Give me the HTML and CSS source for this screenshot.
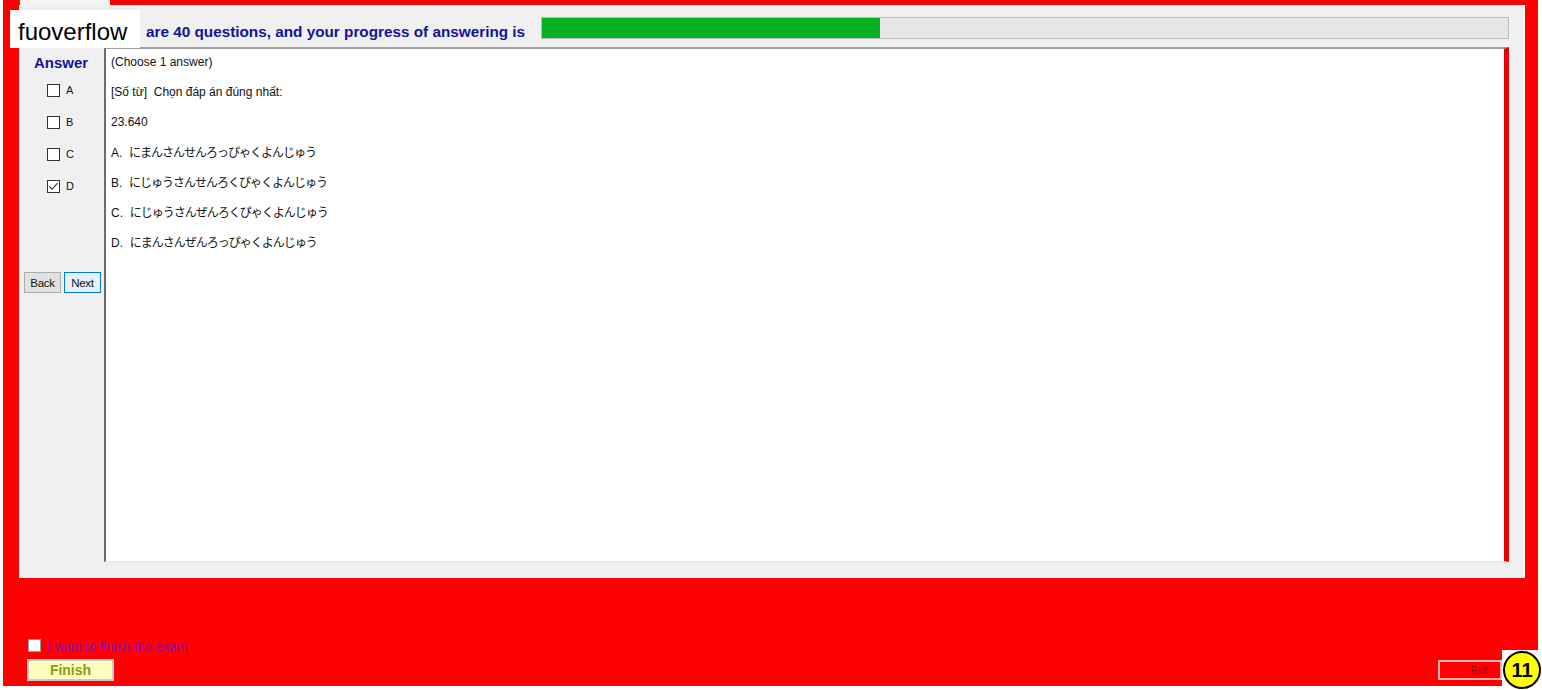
FILE: index.html
```html
<!DOCTYPE html>
<html lang="vi">
<head>
    <meta charset="UTF-8">
    <title>Exam</title>
    <link rel="stylesheet" href="styles.css">
</head>
<body>
    <div class="frame">
        <div class="top-tab"></div>
        <div class="panel">
            <div class="header">
                <div class="header-text">are 40 questions, and your progress of answering is</div>
                <div class="progress"><div class="progress-fill" style="width: 35%"></div></div>
            </div>
            <div class="main">
                <div class="answer-col">
                    <div class="answer-title">Answer</div>
                    <div class="answer-row"><span class="box"></span><span class="answer-label">A</span></div>
                    <div class="answer-row"><span class="box"></span><span class="answer-label">B</span></div>
                    <div class="answer-row"><span class="box"></span><span class="answer-label">C</span></div>
                    <div class="answer-row">
                        <span class="box">
                            <svg width="11" height="11" viewBox="0 0 11 11"><path d="M1.5 5.5 L4.2 8.3 L9.5 2.2" fill="none" stroke="#222" stroke-width="1.1"/></svg>
                        </span>
                        <span class="answer-label">D</span>
                    </div>
                    <div class="nav-buttons">
                        <button class="nav-btn">Back</button>
                        <button class="nav-btn next">Next</button>
                    </div>
                </div>
                <div class="question">
                    <div class="q-line">(Choose 1 answer)</div>
                    <div class="q-line">[Số từ]&nbsp; Chọn đáp án đúng nhất:</div>
                    <div class="q-line">23.640</div>
                    <div class="q-line">A.&nbsp; <span class="jp">にまんさんせんろっぴゃくよんじゅう</span></div>
                    <div class="q-line">B.&nbsp; <span class="jp">にじゅうさんせんろくぴゃくよんじゅう</span></div>
                    <div class="q-line">C.&nbsp; <span class="jp">にじゅうさんぜんろくぴゃくよんじゅう</span></div>
                    <div class="q-line">D.&nbsp; <span class="jp">にまんさんぜんろっぴゃくよんじゅう</span></div>
                </div>
            </div>
        </div>
        <div class="footer">
            <div class="finish-group">
                <div class="finish-check"><span class="white-box"></span><span class="finish-label">I want to finish the exam</span></div>
                <button class="finish-btn">Finish</button>
            </div>
            <button class="exit-btn">Exit</button>
        </div>
    </div>
    <div class="watermark">fuoverflow</div>
    <div class="badge"><span class="badge-circle">11</span></div>
</body>
</html>
```

FILE: styles.css
```css
body {
    margin: 0;
    background-color: #ffffff;
    font-family: "Liberation Sans", Arial, sans-serif;
    width: 1542px;
    height: 690px;
    overflow: hidden;
    position: relative;
}

.frame {
    margin-left: 3px;
    width: 1535px;
    height: 686px;
    background-color: #ff0000;
    display: flex;
    flex-direction: column;
}

.top-tab {
    margin-left: 17px;
    width: 90px;
    height: 5px;
    background-color: #f4f4f4;
}

.panel {
    margin-left: 16px;
    width: 1504px;
    height: 573px;
    background-color: #f0f0f0;
    border-right: 2px solid #fafafa;
    display: flex;
    flex-direction: column;
}

.header {
    display: flex;
    align-items: center;
    height: 42px;
    padding-top: 4px;
    box-sizing: border-box;
}

.header-text {
    width: 395px;
    margin-left: 127px;
    margin-top: 8px;
    font-size: 15.3px;
    font-weight: bold;
    color: #14149a;
    white-space: nowrap;
}

.progress {
    width: 968px;
    height: 22px;
    box-sizing: border-box;
    border: 1px solid #bcbcbc;
    background-color: #e6e6e6;
}

.progress-fill {
    height: 100%;
    background-color: #06b025;
}

.main {
    display: flex;
    height: 515px;
}

.answer-col {
    width: 85px;
    padding-top: 7px;
    box-sizing: border-box;
}

.answer-title {
    font-size: 15px;
    font-weight: bold;
    line-height: 18px;
    color: #14149a;
    margin-bottom: 2px;
    padding-left: 15px;
}

.answer-row {
    display: flex;
    align-items: center;
    height: 32px;
    padding-left: 28px;
}

.box {
    width: 13px;
    height: 13px;
    box-sizing: border-box;
    border: 1px solid #333333;
    background-color: #ffffff;
    display: flex;
    align-items: center;
    justify-content: center;
}

.answer-label {
    margin-left: 6px;
    font-size: 11px;
    color: #111111;
}

.nav-buttons {
    display: flex;
    gap: 3px;
    margin-top: 70px;
    padding-left: 5px;
}

.nav-btn {
    width: 37px;
    height: 21px;
    padding: 0;
    font-family: "Liberation Sans", Arial, sans-serif;
    font-size: 11.5px;
    color: #111111;
    background-color: #e1e1e1;
    border: 1px solid #adadad;
    letter-spacing: -0.3px;
}

.nav-btn.next {
    background-color: #e5f1fb;
    border-color: #0078d7;
}

.question {
    width: 1405px;
    background-color: #ffffff;
    border-top: 2px solid #a0a0a0;
    border-left: 2px solid #6d6d6d;
    border-right: 5px solid #e80000;
    border-bottom: 1px solid #e4e4e4;
    box-sizing: border-box;
    padding: 3px 0 0 5px;
    display: flex;
    flex-direction: column;
    gap: 10px;
}

.q-line {
    height: 20px;
    font-size: 12px;
    line-height: 20px;
    color: #111111;
}

.jp {
    font-family: "Noto Sans CJK JP", sans-serif;
    letter-spacing: -1px;
}

.footer {
    flex: 1;
    display: flex;
    justify-content: space-between;
    align-items: flex-end;
    padding: 0 36px 5px 24px;
}

.finish-group {
    display: flex;
    flex-direction: column;
    gap: 5px;
}

.finish-check {
    display: flex;
    align-items: center;
    padding-left: 1px;
}

.white-box {
    width: 11px;
    height: 11px;
    background-color: #ffffff;
    border: 1px solid #999999;
}

.finish-label {
    margin-left: 6px;
    margin-top: 3px;
    font-size: 13px;
    color: #8a0fb0;
}

.finish-btn {
    width: 87px;
    height: 22px;
    padding: 0;
    background-color: #ffffc0;
    border: 2px solid #c8c8c8;
    font-family: "Liberation Sans", Arial, sans-serif;
    font-size: 14px;
    font-weight: bold;
    color: #8a9a1c;
}

.exit-btn {
    width: 64px;
    height: 20px;
    padding: 0 0 0 18px;
    margin-bottom: 1px;
    background-color: #ff0000;
    border: 2px solid #ffb0b0;
    font-family: "Liberation Sans", Arial, sans-serif;
    font-size: 10px;
    color: #9a0000;
}

.watermark {
    position: absolute;
    left: 10px;
    top: 10px;
    width: 130px;
    height: 38px;
    box-sizing: border-box;
    padding-left: 8px;
    background-color: #ffffff;
    font-size: 24px;
    line-height: 43px;
    color: #000000;
}

.badge {
    position: absolute;
    left: 1502px;
    top: 650px;
    width: 40px;
    height: 40px;
    background-color: #ffffff;
    display: flex;
    align-items: center;
    justify-content: center;
}

.badge-circle {
    width: 34px;
    height: 34px;
    border-radius: 50%;
    border: 2px solid #000000;
    background-color: #ffff00;
    display: flex;
    align-items: center;
    justify-content: center;
    font-size: 20px;
    font-weight: bold;
    color: #000000;
}
```
